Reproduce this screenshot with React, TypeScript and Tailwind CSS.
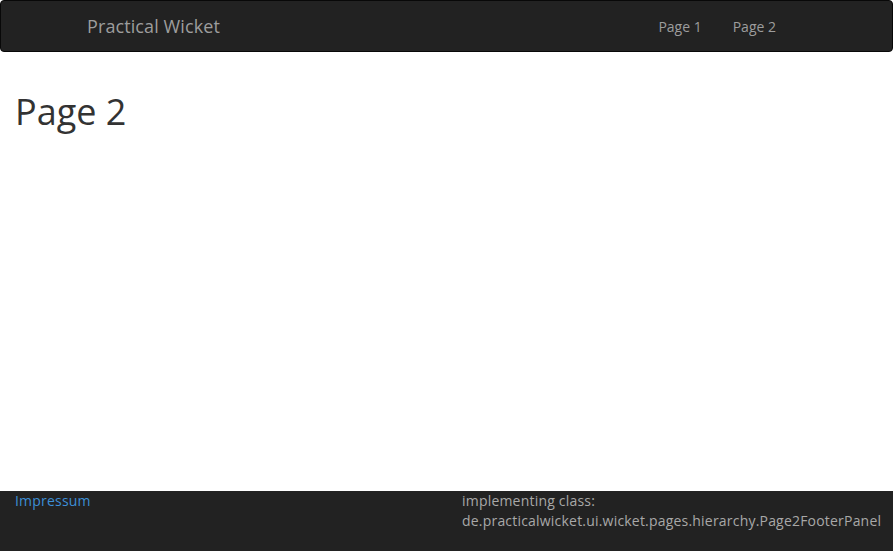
import React from "react";

const font = { fontFamily: '"Open Sans", "Liberation Sans", sans-serif' };

function NavBar() {
  return (
    <nav className="h-[52px] rounded border border-[#080808] bg-[#222222]">
      <div className="flex h-[50px] items-center pl-[86px] pr-[116px]">
        <a className="text-[18px] leading-[20px] tracking-[0.1px] text-[#9d9d9d]">Practical Wicket</a>
        <ul className="ml-auto flex gap-[31px] text-[14px] text-[#9d9d9d]">
          <li>Page 1</li>
          <li>Page 2</li>
        </ul>
      </div>
    </nav>
  );
}

function Footer() {
  return (
    <footer className="flex h-[60px] bg-[#222222] text-[14px] leading-[20px]">
      <div className="w-[462px] pl-[15px]">
        <a className="tracking-[0.2px] text-[#3d8fd6]">Impressum</a>
      </div>
      <div className="tracking-[0.2px] text-[#a8a8a8]">
        <div>implementing class:</div>
        <div>de.practicalwicket.ui.wicket.pages.hierarchy.Page2FooterPanel</div>
      </div>
    </footer>
  );
}

export default function App() {
  return (
    <div className="flex h-[551px] flex-col bg-white" style={font}>
      <NavBar />
      <main className="flex-1 px-[15px]">
        <h1 className="mt-[40px] text-[36px] leading-[40px] text-[#333333]">Page 2</h1>
      </main>
      <Footer />
    </div>
  );
}
